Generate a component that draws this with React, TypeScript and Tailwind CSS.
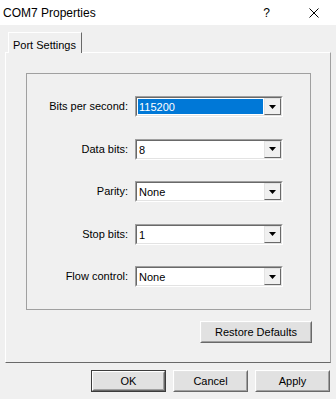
import React from "react";

const rows = [
  { label: "Bits per second:", value: "115200", selected: true },
  { label: "Data bits:", value: "8" },
  { label: "Parity:", value: "None" },
  { label: "Stop bits:", value: "1" },
  { label: "Flow control:", value: "None" },
];

function Combo({ value, selected }: { value: string; selected?: boolean }) {
  return (
    <div className="w-[148px] h-[21px] border border-t-[#a0a0a0] border-l-[#a0a0a0] border-b-white border-r-white">
      <div className="h-full flex border border-t-[#696969] border-l-[#696969] border-b-[#e3e3e3] border-r-[#e3e3e3] bg-white">
        <div className="flex-1 p-px">
          <div
            className={
              selected
                ? "h-full bg-[#0078d7] text-white pl-[1px] leading-[16px]"
                : "h-full text-black pl-[1px] leading-[16px]"
            }
          >
            {value}
          </div>
        </div>
        <div className="w-[17px] h-full bg-[#f0f0f0] border border-t-[#e3e3e3] border-l-[#e3e3e3] border-b-[#696969] border-r-[#696969] flex items-center justify-center">
          <svg width="7" height="4" viewBox="0 0 7 4">
            <path d="M0 0h7L3.5 4z" fill="#000" />
          </svg>
        </div>
      </div>
    </div>
  );
}

function Button({ children, width, isDefault }: { children: React.ReactNode; width: string; isDefault?: boolean }) {
  return (
    <div
      className={
        (isDefault ? "border border-[#3c3c3c] " : "") +
        width +
        " h-[22px] flex"
      }
    >
      <div className="flex-1 flex border border-t-white border-l-white border-b-[#696969] border-r-[#696969]">
        <div className="flex-1 flex items-center justify-center border border-t-[#e3e3e3] border-l-[#e3e3e3] border-b-[#a0a0a0] border-r-[#a0a0a0] bg-[#e1e1e1] text-black">
          {children}
        </div>
      </div>
    </div>
  );
}

export default function App() {
  return (
    <div
      className="w-[336px] h-[399px] bg-[#f0f0f0] text-[11px] text-black flex flex-col overflow-hidden"
      style={{ fontFamily: '"Liberation Sans", Arial, sans-serif' }}
    >
      {/* barra de título */}
      <div className="h-[25px] bg-white flex items-center pl-[3px] text-[12px]">
        <span>COM7 Properties</span>
        <span className="ml-auto mr-[39px]">?</span>
        <svg width="10" height="10" viewBox="0 0 10 10" className="mr-[17px]">
          <path d="M0.5 0.5l9 9M9.5 0.5l-9 9" stroke="#000" strokeWidth="1" />
        </svg>
      </div>

      {/* pestaña */}
      <div className="pl-[8px] pt-[7px] flex">
        <div className="relative z-10 -mb-px w-[74px] h-[21px] bg-[#f0f0f0] border-t border-l border-white border-r border-r-[#696969] flex items-start pt-[4px] pl-[4px]">
          Port Settings
        </div>
      </div>

      {/* página */}
      <div className="ml-[5px] w-[326px] h-[311px] border border-t-white border-l-white border-r-[#a0a0a0] border-b-[#696969] flex flex-col">
        <div className="ml-[20px] mt-[20px] w-[285px] h-[237px] border border-[#a0a0a0] flex flex-col pt-[22px] gap-[21.5px]">
          {rows.map((r) => (
            <div key={r.label} className="flex items-center">
              <div className="w-[108px] text-right pr-[7px]">{r.label}</div>
              <Combo value={r.value} selected={r.selected} />
            </div>
          ))}
        </div>
        <div className="flex justify-end mt-[11px] pr-[18px]">
          <Button width="w-[112px]">Restore Defaults</Button>
        </div>
      </div>

      {/* botones */}
      <div className="flex justify-end gap-[7px] pr-[6px] mt-[7px]">
        <Button width="w-[75px]" isDefault>
          OK
        </Button>
        <Button width="w-[75px]">Cancel</Button>
        <Button width="w-[75px]">Apply</Button>
      </div>
    </div>
  );
}
